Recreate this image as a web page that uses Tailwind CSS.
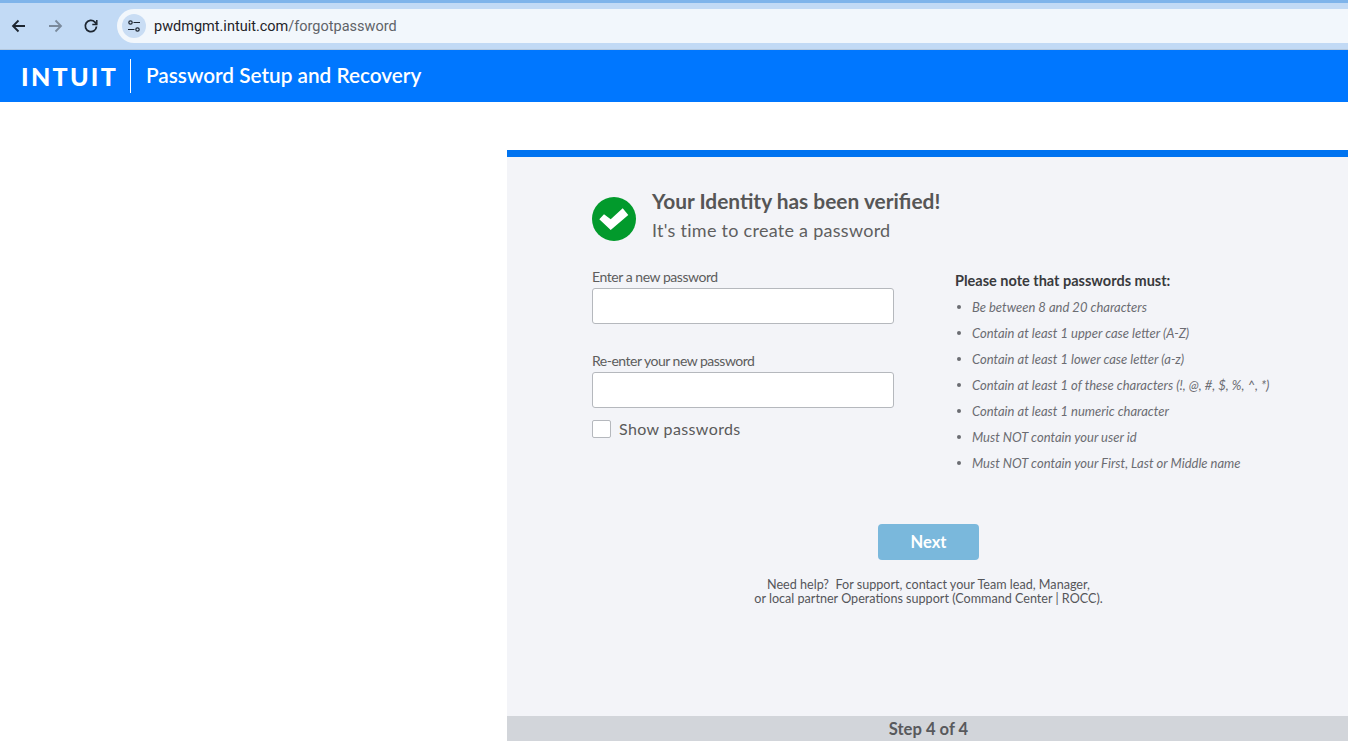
<!DOCTYPE html>
<html lang="en">
<head>
  <meta charset="UTF-8" />
  <title>Password Setup and Recovery</title>
  <script src="https://cdn.jsdelivr.net/npm/@tailwindcss/browser@4"></script>
</head>
<body class="bg-white h-[741px] w-[1348px] overflow-hidden flex flex-col font-['Lato',sans-serif]">
  <!-- Browser bar -->
  <div class="h-[50px] shrink-0 bg-[#c2daf5] border-t-[3px] border-[#7fb4ea] border-b border-b-[#b4c8de] flex items-center font-['Roboto',sans-serif]">
    <div class="flex items-center w-[117px] pl-[9px] gap-[16px]">
      <svg class="w-5 h-5" viewBox="0 0 20 20" fill="none" stroke="#1c2530" stroke-width="1.8"><path d="M16 10H4M9.5 4.5 4 10l5.500 5.500"/></svg>
      <svg class="w-5 h-5" viewBox="0 0 20 20" fill="none" stroke="#7a8a9c" stroke-width="1.8"><path d="M4 10h12M10.500 4.500 16 10l-5.500 5.500"/></svg>
      <svg class="w-5 h-5" viewBox="0 0 20 20" fill="none" stroke="#1c2530" stroke-width="1.800"><path d="M15.500 10.500a5.600 5.600 0 1 1-1.600-4.400L15.500 8"/><path d="M15.800 4v4.500h-4.500" stroke-width="1.500"/></svg>
    </div>
    <div class="flex-1 h-[34px] bg-[#f2f7fc] rounded-l-full flex items-center pl-[5px]">
      <div class="w-6 h-6 rounded-full bg-[#c9ddf4] flex items-center justify-center">
        <svg class="w-4 h-4" viewBox="0 0 16 16" fill="none" stroke="#1c2530" stroke-width="1.200"><circle cx="4.500" cy="4.500" r="1.700"/><path d="M7.500 4.500H14M2 11.500h6.500"/><circle cx="11.500" cy="11.500" r="1.700"/></svg>
      </div>
      <span class="ml-[8px] pt-[2px] text-[14.500px] text-[#1f2328]">pwdmgmt.intuit.com<span class="text-[#5f6368]">/forgotpassword</span></span>
    </div>
  </div>

  <!-- Header -->
  <header class="h-[52px] shrink-0 bg-[#0077ff] flex items-center text-white">
    <span class="ml-[21px] w-[97px] text-[25px] font-black tracking-[2.300px] leading-none">INTUIT</span>
    <div class="ml-[12px] w-px h-[34px] bg-white"></div>
    <h1 class="ml-[15px] -mt-[2px] text-[20.750px] font-semibold leading-none">Password Setup and Recovery</h1>
  </header>

  <!-- Main -->
  <main class="flex-1 pt-[48px] pl-[507px] flex min-h-0">
    <section class="flex-1 flex flex-col border-t-[7px] border-[#0073f0] bg-[#f3f4f8]">
      <div class="flex-1 pl-[85px] pt-[36px]">
        <div class="flex items-center">
          <div class="w-11 h-11 rounded-full bg-[#029a2c] flex items-center justify-center">
            <svg class="w-[30px] h-7" viewBox="0 0 30 28" fill="#fff"><polygon points="23.700,3.300 29.300,10 11.700,25 0.300,14.300 5,9.300 11.700,14.300"/></svg>
          </div>
          <div class="ml-[16px] -mt-[6px]">
            <h2 class="text-[20.900px] font-bold leading-[28px] text-[#565656]">Your Identity has been verified!</h2>
            <p class="text-[18px] leading-[30px] tracking-[0.270px] text-[#5f5f5f]">It's time to create a password</p>
          </div>
        </div>

        <div class="flex mt-[22px]">
          <div class="w-[302px]">
            <label class="block text-[14px] leading-[20px] text-[#5d5d5d] tracking-[-0.450px]">Enter a new password</label>
            <input type="password" class="block mt-px w-full h-9 bg-white border border-[#b5b8bd] rounded-[3px]" />
            <label class="block mt-[27px] text-[14px] leading-[20px] text-[#5d5d5d] tracking-[-0.500px]">Re-enter your new password</label>
            <input type="password" class="block mt-px w-full h-9 bg-white border border-[#b5b8bd] rounded-[3px]" />
            <div class="flex items-center mt-[11px]">
              <span class="w-[19px] h-[18px] bg-white border border-[#b5b8bd] rounded-[2px]"></span>
              <span class="ml-[8px] text-[16px] leading-[20px] tracking-[0.370px] text-[#5a5a5a]">Show passwords</span>
            </div>
          </div>
          <div class="ml-[61px] pt-[4px]">
            <h3 class="text-[14.500px] font-bold leading-[20px] text-[#393a3d]">Please note that passwords must:</h3>
            <ul class="mt-[3px] text-[13px] italic leading-[26px] text-[#6b6c72]">
              <li class="flex items-center"><span class="w-[4px] h-[4px] rounded-full bg-[#6b6c72] mr-[11px] ml-[2px]"></span>Be between 8 and 20 characters</li>
              <li class="flex items-center"><span class="w-[4px] h-[4px] rounded-full bg-[#6b6c72] mr-[11px] ml-[2px]"></span>Contain at least 1 upper case letter (A-Z)</li>
              <li class="flex items-center"><span class="w-[4px] h-[4px] rounded-full bg-[#6b6c72] mr-[11px] ml-[2px]"></span>Contain at least 1 lower case letter (a-z)</li>
              <li class="flex items-center"><span class="w-[4px] h-[4px] rounded-full bg-[#6b6c72] mr-[11px] ml-[2px]"></span>Contain at least 1 of these characters (!, @, #, $, %, ^, *)</li>
              <li class="flex items-center"><span class="w-[4px] h-[4px] rounded-full bg-[#6b6c72] mr-[11px] ml-[2px]"></span>Contain at least 1 numeric character</li>
              <li class="flex items-center"><span class="w-[4px] h-[4px] rounded-full bg-[#6b6c72] mr-[11px] ml-[2px]"></span>Must NOT contain your user id</li>
              <li class="flex items-center"><span class="w-[4px] h-[4px] rounded-full bg-[#6b6c72] mr-[11px] ml-[2px]"></span>Must NOT contain your First, Last or Middle name</li>
            </ul>
          </div>
        </div>
      </div>

      <div class="flex flex-col items-center pl-[2px] pb-[110px]">
        <button class="w-[101px] h-9 rounded-[4px] bg-[#7ab8dc] text-white text-[16.500px] font-bold">Next</button>
        <p class="mt-[18px] text-center text-[12.600px] leading-[14px] text-[#55565a]">Need help?&nbsp; For support, contact your Team lead, Manager,<br />or local partner Operations support (Command Center | ROCC).</p>
      </div>

      <footer class="h-[25px] shrink-0 pl-[2px] bg-[#d2d5da] text-center text-[16.600px] font-bold leading-[26px] text-[#58595c]">Step 4 of 4</footer>
    </section>
  </main>
</body>
</html>
